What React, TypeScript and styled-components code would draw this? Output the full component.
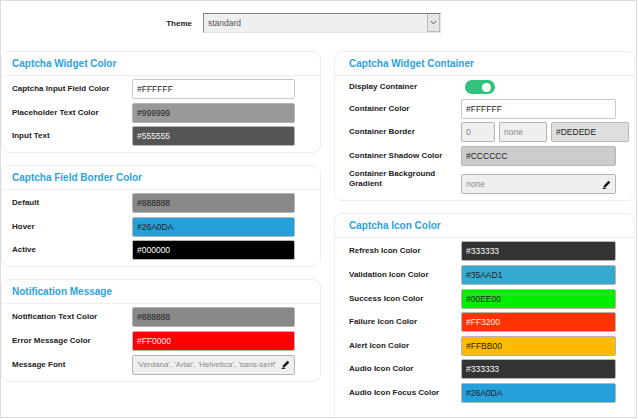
import React from 'react';
import styled, { createGlobalStyle } from 'styled-components';

const GlobalStyle = createGlobalStyle`
    html, body {
        margin: 0;
        padding: 0;
        background: #ffffff;
    }
    body {
        font-family: "Liberation Sans", Arial, Helvetica, sans-serif;
        color: #222222;
    }
`;

const Frame = styled.div`
    box-sizing: border-box;
    width: 637px;
    height: 418px;
    border: 1px solid #dcdcdc;
    overflow: hidden;
    padding-top: 12px;
`;

const ThemeRow = styled.div`
    display: grid;
    grid-template-columns: 191px 238px;
    column-gap: 11px;
    align-items: center;
    height: 20px;
`;

const ThemeLabel = styled.label`
    text-align: right;
    font-size: 8px;
    font-weight: bold;
    color: #222;
`;

const Select = styled.div`
    box-sizing: border-box;
    height: 20px;
    display: flex;
    align-items: center;
    background: #efefef;
    border-top: 1px solid #7d7d7d;
    border-left: 1px solid #8a8a8a;
    border-right: 1px solid #e2e2e2;
    border-bottom: 1px solid #e2e2e2;
    font-size: 8.5px;
    color: #555;
`;

const SelectText = styled.span`
    flex: 1;
    padding-left: 4px;
`;

const SelectArrow = styled.span`
    box-sizing: border-box;
    width: 13px;
    height: 18px;
    display: flex;
    align-items: center;
    justify-content: center;
    background: #e6e6e6;
    border: 1px solid #b9b9b9;
    border-top: none;
`;

const Columns = styled.div`
    display: grid;
    grid-template-columns: 320px 301px;
    column-gap: 13px;
    margin-top: 18px;
    align-items: start;
`;

const Column = styled.div<{ $gap: number }>`
    display: flex;
    flex-direction: column;
    gap: ${p => p.$gap}px;
`;

const Card = styled.section<{ $pad: number; $open?: boolean }>`
    box-sizing: border-box;
    border: 1px solid #eeeeee;
    border-radius: 8px;
    ${p => (p.$open ? 'border-bottom: none; border-bottom-left-radius: 0; border-bottom-right-radius: 0; min-height: 220px;' : '')}
    --pad: ${p => p.$pad}px;
`;

const CardHeader = styled.h2`
    margin: 0;
    height: 23px;
    line-height: 23px;
    padding-left: var(--pad);
    border-bottom: 1px solid #eeeeee;
    font-size: 10px;
    font-weight: bold;
    color: #2ea2df;
`;

const CardBody = styled.div`
    display: flex;
    flex-direction: column;
    gap: 3.6px;
    padding: 3px 0 6px var(--pad);
`;

const Row = styled.div<{ $labelWidth: number; $height?: number; $align?: string }>`
    display: flex;
    align-items: ${p => p.$align || 'center'};
    height: ${p => p.$height || 20}px;
    & > label {
        width: ${p => p.$labelWidth}px;
    }
`;

const Label = styled.label`
    flex: none;
    font-size: 8px;
    font-weight: bold;
    color: #222;
    line-height: 10px;
`;

const Field = styled.div<{ $bg: string; $fg: string; $w: number; $top?: number }>`
    box-sizing: border-box;
    flex: none;
    width: ${p => p.$w}px;
    height: 20px;
    margin-top: ${p => p.$top || 0}px;
    display: flex;
    align-items: center;
    gap: 2px;
    padding: 0 4px;
    background: ${p => p.$bg};
    color: ${p => p.$fg};
    border: 1px solid ${p => (p.$bg === '#FFFFFF' ? '#c8c8c8' : '#b5b5b5')};
    border-radius: 2px;
    font-size: 8.5px;
    white-space: nowrap;
    overflow: hidden;
`;

const FieldText = styled.span<{ $size?: number }>`
    flex: 1;
    overflow: hidden;
    font-size: ${p => p.$size || 8.5}px;
`;

const FieldGroup = styled.div`
    display: flex;
    gap: 4px;
`;

const Toggle = styled.div<{ $on: boolean }>`
    position: relative;
    width: 30px;
    height: 14px;
    margin-left: 4px;
    border-radius: 7px;
    background: ${p => (p.$on ? '#31c27c' : '#cccccc')};
    &::after {
        content: '';
        position: absolute;
        top: 2.5px;
        right: ${p => (p.$on ? '4px' : '17px')};
        width: 9px;
        height: 9px;
        border-radius: 50%;
        background: #ffffff;
    }
`;

function textOn(hex: string) {
    const r = parseInt(hex.slice(1, 3), 16);
    const g = parseInt(hex.slice(3, 5), 16);
    const b = parseInt(hex.slice(5, 7), 16);
    const lum = 0.299 * r + 0.587 * g + 0.114 * b;
    if (lum < 70) return '#ffffff';
    if (lum < 115) return '#f2f2f2';
    return '#222222';
}

const PenIcon = () => (
    <svg width="9" height="9" viewBox="0 0 10 10">
        <path d="M7.2 0.8 L9.2 2.8 L4 8 L1.6 8.6 L2.2 6.2 Z" fill="#111" />
        <path d="M0.6 9.4 H4.6" stroke="#111" strokeWidth="1" />
    </svg>
);

const ChevronIcon = () => (
    <svg width="7" height="5" viewBox="0 0 7 5">
        <path d="M0.8 1 L3.5 3.8 L6.2 1" fill="none" stroke="#555" strokeWidth="1" />
    </svg>
);

type ColorRow = { label: string; value: string };

function ColorRows({ rows, labelWidth, width }: { rows: ColorRow[]; labelWidth: number; width: number }) {
    return (
        <>
            {rows.map(r => (
                <Row key={r.label} $labelWidth={labelWidth}>
                    <Label>{r.label}</Label>
                    <Field $bg={r.value} $fg={textOn(r.value)} $w={width}>{r.value}</Field>
                </Row>
            ))}
        </>
    );
}

const widgetColors: ColorRow[] = [
    { label: 'Captcha Input Field Color', value: '#FFFFFF' },
    { label: 'Placeholder Text Color', value: '#999999' },
    { label: 'Input Text', value: '#555555' },
];

const borderColors: ColorRow[] = [
    { label: 'Default', value: '#888888' },
    { label: 'Hover', value: '#26A0DA' },
    { label: 'Active', value: '#000000' },
];

const iconColors: ColorRow[] = [
    { label: 'Refresh Icon Color', value: '#333333' },
    { label: 'Validation Icon Color', value: '#35AAD1' },
    { label: 'Success Icon Color', value: '#00EE00' },
    { label: 'Failure Icon Color', value: '#FF3200' },
    { label: 'Alert Icon Color', value: '#FFBB00' },
    { label: 'Audio Icon Color', value: '#333333' },
    { label: 'Audio Icon Focus Color', value: '#26A0DA' },
];

const MUTED_BG = '#efefef';
const MUTED_FG = '#8a8a8a';

const App: React.FC = () => {
    return (
        <Frame>
            <GlobalStyle />
            <ThemeRow>
                <ThemeLabel>Theme</ThemeLabel>
                <Select>
                    <SelectText>standard</SelectText>
                    <SelectArrow><ChevronIcon /></SelectArrow>
                </Select>
            </ThemeRow>

            <Columns>
                <Column $gap={12}>
                    <Card $pad={10}>
                        <CardHeader>Captcha Widget Color</CardHeader>
                        <CardBody>
                            <ColorRows rows={widgetColors} labelWidth={120} width={163} />
                        </CardBody>
                    </Card>
                    <Card $pad={10}>
                        <CardHeader>Captcha Field Border Color</CardHeader>
                        <CardBody>
                            <ColorRows rows={borderColors} labelWidth={120} width={163} />
                        </CardBody>
                    </Card>
                    <Card $pad={10}>
                        <CardHeader>Notification Message</CardHeader>
                        <CardBody>
                            <ColorRows
                                rows={[
                                    { label: 'Notification Text Color', value: '#888888' },
                                    { label: 'Error Message Color', value: '#FF0000' },
                                ]}
                                labelWidth={120}
                                width={163}
                            />
                            <Row $labelWidth={120}>
                                <Label>Message Font</Label>
                                <Field $bg={MUTED_BG} $fg={MUTED_FG} $w={163}>
                                    <FieldText $size={8}>'Verdana', 'Arial', 'Helvetica', 'sans-serif'</FieldText>
                                    <PenIcon />
                                </Field>
                            </Row>
                        </CardBody>
                    </Card>
                </Column>

                <Column $gap={12}>
                    <Card $pad={14}>
                        <CardHeader>Captcha Widget Container</CardHeader>
                        <CardBody>
                            <Row $labelWidth={112} $height={16}>
                                <Label>Display Container</Label>
                                <Toggle $on />
                            </Row>
                            <Row $labelWidth={112}>
                                <Label>Container Color</Label>
                                <Field $bg="#FFFFFF" $fg="#222222" $w={155}>#FFFFFF</Field>
                            </Row>
                            <Row $labelWidth={112}>
                                <Label>Container Border</Label>
                                <FieldGroup>
                                    <Field $bg={MUTED_BG} $fg={MUTED_FG} $w={34}>0</Field>
                                    <Field $bg={MUTED_BG} $fg={MUTED_FG} $w={48}>none</Field>
                                    <Field $bg="#DEDEDE" $fg="#222222" $w={78}>#DEDEDE</Field>
                                </FieldGroup>
                            </Row>
                            <Row $labelWidth={112}>
                                <Label>Container Shadow Color</Label>
                                <Field $bg="#CCCCCC" $fg="#222222" $w={155}>#CCCCCC</Field>
                            </Row>
                            <Row $labelWidth={112} $height={25} $align="flex-start">
                                <Label>Container Background Gradient</Label>
                                <Field $bg={MUTED_BG} $fg={MUTED_FG} $w={155} $top={5}>
                                    <FieldText>none</FieldText>
                                    <PenIcon />
                                </Field>
                            </Row>
                        </CardBody>
                    </Card>
                    <Card $pad={14} $open>
                        <CardHeader>Captcha Icon Color</CardHeader>
                        <CardBody>
                            <ColorRows rows={iconColors} labelWidth={112} width={155} />
                        </CardBody>
                    </Card>
                </Column>
            </Columns>
        </Frame>
    );
};

export default App;
